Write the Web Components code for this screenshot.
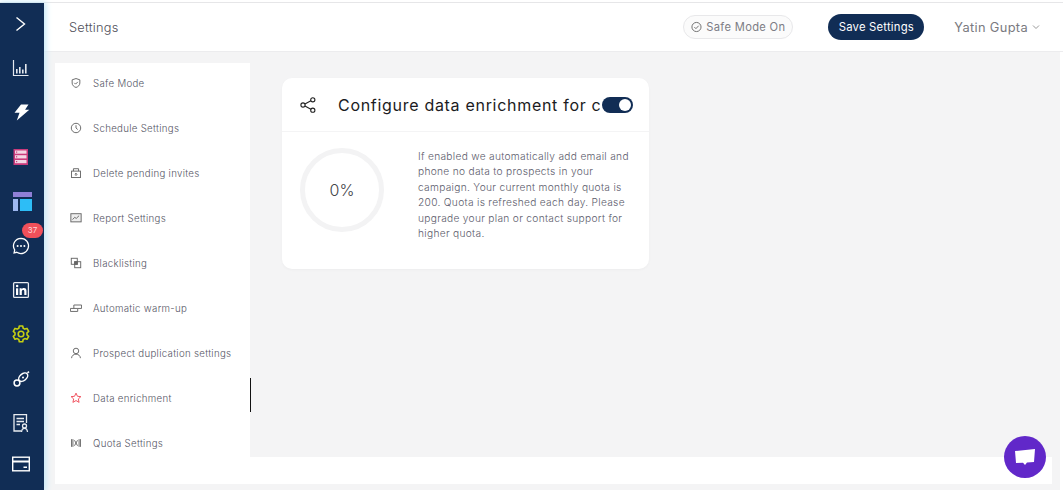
<!DOCTYPE html>
<html>
<head>
<meta charset="utf-8">
<title>Settings</title>
<style>
  html, body { margin: 0; padding: 0; background: #fff; }
  body { font-family: Inter, "Open Sans", sans-serif; width: 1063px; height: 490px; overflow: hidden; }
</style>
</head>
<body>
<app-shell>
  <side-nav slot="nav"></side-nav>
  <top-bar slot="top" title-text="Settings" user="Yatin Gupta"></top-bar>
  <settings-menu slot="menu"></settings-menu>
  <enrich-card slot="panel" percent="0%">
    <span slot="title">Configure data enrichment for campaigns</span>
    If enabled we automatically add email and<br>phone no data to prospects in your<br>campaign. Your current monthly quota is<br>200. Quota is refreshed each day. Please<br>upgrade your plan or contact support for<br>higher quota.
  </enrich-card>
</app-shell>
<chat-launcher></chat-launcher>

<script>
// left rail icons
const NAV_ICONS = [
  `<path d="M5.500 3.500l8 6.500-8 6.500" fill="none" stroke="#fff" stroke-width="1.400"/>`,
  `<g fill="none" stroke="#e4e8ee" stroke-width="1.200"><path d="M2.500 2v15.500h15"/></g><g fill="#e4e8ee"><rect x="5" y="11" width="1.600" height="4.500"/><rect x="8" y="9" width="1.600" height="6.500"/><rect x="11" y="11.500" width="1.600" height="4"/><rect x="14" y="6" width="1.600" height="9.500"/></g>`,
  `<path d="M10 2.500h7.500l-3.400 5.200h4.200L5.800 18.500l2.700-7.700H3.500z" fill="#fff"/>`,
  `<rect x="2.500" y="2" width="14.500" height="16" fill="#c93a7b"/><g fill="#f3d6e4"><rect x="4" y="3.500" width="11.500" height="3.200"/><rect x="4" y="8.200" width="11.500" height="3.200"/><rect x="4" y="13" width="11.500" height="3.200"/></g><g fill="#c93a7b"><rect x="5" y="4.500" width="1.200" height="1.200"/><rect x="5" y="9.200" width="1.200" height="1.200"/><rect x="5" y="14" width="1.200" height="1.200"/></g>`,
  `<rect x="0" y="0" width="19" height="5" fill="#8f7fd6"/><rect x="0" y="7" width="5" height="12" fill="#9db7f0"/><rect x="7" y="7" width="12" height="12" fill="#2dbdf6"/>`,
  `<path d="M10 2.300a7.600 7.600 0 1 1-4.200 14l-2.700.6.600-2.900A7.600 7.600 0 0 1 10 2.300z" fill="none" stroke="#fff" stroke-width="1.300"/><g fill="#fff"><circle cx="6.600" cy="10" r="1"/><circle cx="10" cy="10" r="1"/><circle cx="13.400" cy="10" r="1"/></g>`,
  `<rect x="2.600" y="2.600" width="14.800" height="14.800" rx="1" fill="none" stroke="#e8ebf0" stroke-width="1.300"/><g fill="#fff"><rect x="5" y="8.300" width="2.200" height="6.700"/><circle cx="6.100" cy="6" r="1.250"/><path d="M8.600 8.300h2.100v.95c.4-.65 1.200-1.150 2.200-1.150 1.900 0 2.600 1.200 2.600 3v3.900h-2.200v-3.500c0-.9-.3-1.500-1.100-1.500s-1.400.6-1.400 1.500V15H8.600z"/></g>`,
  `<g fill="none" stroke="#c6cf12" stroke-width="1.600" stroke-linejoin="round"><path d="M8.300 2h3.400l.5 2.200 1.600.9 2.200-.7 1.700 3-1.700 1.500v1.900l1.700 1.500-1.700 3-2.200-.7-1.600.9-.5 2.200H8.300l-.5-2.200-1.600-.9-2.200.7-1.700-3 1.700-1.500V8.900L2.300 7.400l1.700-3 2.200.7 1.600-.9z"/><circle cx="10" cy="10" r="2.800"/></g>`,
  `<g fill="none" stroke="#fff" stroke-width="1.500"><circle cx="6" cy="14" r="2.900"/><ellipse cx="12.200" cy="8.200" rx="5.200" ry="3.300" transform="rotate(-40 12.200 8.200)"/><path d="M16.500 3.900l1.500-1.300"/></g><circle cx="12" cy="8.500" r="1" fill="#fff"/>`,
  `<g fill="none" stroke="#e8ebf0" stroke-width="1.300"><path d="M10 18H3V1.700h12.500V10"/><path d="M5.500 5.500h7.500M5.500 8.500h7.500M5.500 11.500h3.500"/><circle cx="13.500" cy="13" r="2"/><path d="M10.500 19c.2-2.300 1.400-3.700 3-3.700s2.800 1.400 3 3.700"/></g>`,
  `<rect x="1.700" y="3.200" width="16.600" height="13.600" fill="none" stroke="#fff" stroke-width="1.400"/><rect x="2" y="6.500" width="16" height="2" fill="#fff"/><rect x="12.500" y="12.500" width="3.500" height="1.500" fill="#fff"/>`
];

class SideNav extends HTMLElement {
  constructor() {
    super();
    this.attachShadow({ mode: "open" });
  }

  connectedCallback() {
    const items = NAV_ICONS.map((icon, i) => {
      const badge = i === 5 ? `<span class="badge">37</span>` : "";
      const box = i === 4 ? "0 0 19 19" : "0 0 20 20";
      const size = i === 4 ? 19 : 20;
      return `<li class="${i === 4 ? "wide" : ""}">${badge}<svg width="${size}" height="${size}" viewBox="${box}">${icon}</svg></li>`;
    }).join("");

    this.shadowRoot.innerHTML = `
      <style>
        :host {
          display: block;
          width: 44px;
          background: #112d55;
          box-shadow: 1px 0 6px 1px #c4e8f8;
          position: relative;
          z-index: 2;
          overflow: visible;
        }
        ul {
          list-style: none;
          margin: -1.500px 0 0;
          padding: 0;
        }
        li {
          height: 44.4px;
          display: flex;
          align-items: center;
          justify-content: center;
          position: relative;
          padding-right: 3px;
          box-sizing: border-box;
        }
        li.wide svg { margin-left: 4px; }
        li:last-child { margin-top: -4px; }
        .badge {
          position: absolute;
          left: 22px;
          top: 0;
          width: 21px;
          height: 15px;
          border-radius: 8px;
          background: #f0505a;
          color: #ffd5d8;
          font-size: 8px;
          line-height: 15px;
          text-align: center;
        }
      </style>
      <ul>${items}</ul>
    `;
  }
}

class TopBar extends HTMLElement {
  constructor() {
    super();
    this.attachShadow({ mode: "open" });
  }

  connectedCallback() {
    const title = this.getAttribute("title-text") || "";
    const user = this.getAttribute("user") || "";

    this.shadowRoot.innerHTML = `
      <style>
        :host {
          display: flex;
          align-items: center;
          height: 49px;
          box-sizing: border-box;
          background: #fff;
          border-bottom: 1px solid #ececee;
          padding: 0 23px 0 25px;
          color: #666;
        }
        h1 {
          margin: 0;
          font-size: 12.800px;
          font-weight: 300;
          letter-spacing: .25px;
          color: #50505a;
          flex: 1;
        }
        .safe {
          display: flex;
          align-items: center;
          gap: 4px;
          height: 24px;
          box-sizing: border-box;
          padding: 0 7px;
          width: 110px;
          border: 1px solid #e8e8ea;
          border-radius: 12px;
          background: #fbfbfb;
          font-size: 11.200px;
          letter-spacing: .3px;
          color: #7d7d85;
          margin-right: 35px;
          white-space: nowrap;
        }
        button {
          height: 26px;
          width: 96px;
          border: 0;
          padding: 0;
          border-radius: 13px;
          background: #112d55;
          color: #fff;
          font: inherit;
          font-size: 11.300px;
          letter-spacing: .2px;
          margin-right: 30px;
        }
        .user {
          display: flex;
          align-items: center;
          gap: 4px;
          font-size: 12.800px;
          letter-spacing: .35px;
          color: #7a7a80;
          white-space: nowrap;
        }
      </style>
      <h1>${title}</h1>
      <div class="safe">
        <svg width="12" height="12" viewBox="0 0 12 12" fill="none" stroke="#666" stroke-width="1"><circle cx="6" cy="6" r="5"/><path d="M3.700 6.100l1.700 1.700 3-3.200"/></svg>
        Safe Mode On
      </div>
      <button>Save Settings</button>
      <div class="user">${user}
        <svg width="8" height="6" viewBox="0 0 8 6" fill="none" stroke="#999" stroke-width="1"><path d="M1 1.500l3 3 3-3"/></svg>
      </div>
    `;
  }
}

const MENU_ITEMS = [
  ["Safe Mode", `<path d="M7 1.800l4.500 1.500v3.700c0 2.600-2 4.400-4.500 5.200C4.500 11.400 2.500 9.600 2.500 7V3.300z"/><path d="M5 6.800l1.500 1.500 2.600-2.600"/>`],
  ["Schedule Settings", `<circle cx="7" cy="7" r="5.500"/><path d="M7 3.800V7l2 1.800"/>`],
  ["Delete pending invites", `<rect x="1.800" y="4.800" width="10.400" height="7.500"/><path d="M4 4.800V2h6v2.800M7 10.500V7.500M5.500 8.800L7 7.300l1.500 1.500"/>`],
  ["Report Settings", `<rect x="1" y="2" width="12" height="9.500" fill="#eee"/><path d="M3 8.800l2.500-2.600 1.800 1.300 3.300-3.200"/>`],
  ["Blacklisting", `<rect x="1.500" y="1.500" width="7" height="7"/><rect x="5.500" y="5.500" width="7" height="7"/><rect x="5.500" y="5.500" width="3" height="3" fill="#666"/>`],
  ["Automatic warm-up", `<path d="M.5 7.500h8.500v3.500H.5zM4.500 7.500V3.500h9v4H9"/>`],
  ["Prospect duplication settings", `<circle cx="7" cy="4.600" r="3.200"/><path d="M1.800 13c.3-3 2.400-4.600 5.200-4.600s4.900 1.600 5.200 4.600"/>`],
  ["Data enrichment", `<path d="M7 1.300l1.700 3.700 4 .4-3 2.700.9 4L7 10l-3.600 2.100.9-4-3-2.700 4-.4z"/>`],
  ["Quota Settings", `<path d="M1.800 2.500v9M3.400 2.500v9M12.200 2.500v9M10.600 2.500v9M5.200 3.800l3.600 6.400M8.800 3.800l-3.600 6.400"/>`]
];

class SettingsMenu extends HTMLElement {
  constructor() {
    super();
    this.attachShadow({ mode: "open" });
  }

  connectedCallback() {
    const rows = MENU_ITEMS.map(([label, icon]) => {
      const active = label === "Data enrichment";
      return `<li class="${active ? "active" : ""}">
        <svg width="12" height="12" viewBox="0 0 14 14" fill="none" stroke="${active ? "#ef4a58" : "#666"}" stroke-width="1.100">${icon}</svg>
        <span>${label}</span>
      </li>`;
    }).join("");

    this.shadowRoot.innerHTML = `
      <style>
        :host {
          display: block;
          width: 195px;
          height: 394px;
          background: #fff;
        }
        ul {
          list-style: none;
          margin: 0;
          padding: 10px 0 0 15px;
          display: flex;
          flex-direction: column;
          gap: 25px;
        }
        li {
          height: 20px;
          display: flex;
          align-items: center;
          gap: 11px;
          font-size: 9.700px;
          font-weight: 300;
          letter-spacing: .3px;
          color: #565666;
          white-space: nowrap;
          position: relative;
        }
        li.active::after {
          content: "";
          position: absolute;
          left: 180px;
          top: -10px;
          width: 1px;
          height: 34px;
          background: #111;
        }
      </style>
      <ul>${rows}</ul>
    `;
  }
}

class EnrichCard extends HTMLElement {
  constructor() {
    super();
    this.attachShadow({ mode: "open" });
  }

  connectedCallback() {
    const percent = this.getAttribute("percent") || "0%";

    this.shadowRoot.innerHTML = `
      <style>
        :host {
          display: block;
          width: 367px;
          height: 191px;
          background: #fff;
          border-radius: 10px;
          box-shadow: 0 1px 3px rgba(0,0,0,.03);
        }
        header {
          display: flex;
          align-items: center;
          height: 54px;
          box-sizing: border-box;
          border-bottom: 1px solid #f4f4f5;
          padding: 1px 16px 0 18px;
        }
        .share { flex: none; margin-right: 22px; }
        .title {
          flex: 1;
          min-width: 0;
          overflow: hidden;
          white-space: nowrap;
          font-size: 16px;
          letter-spacing: .7px;
          color: #1b1b22;
        }
        .toggle {
          flex: none;
          width: 31px;
          height: 16px;
          margin-left: 2px;
          border-radius: 8px;
          background: #112d55;
          position: relative;
        }
        .toggle::after {
          content: "";
          position: absolute;
          right: 2px;
          top: 2px;
          width: 12px;
          height: 12px;
          border-radius: 50%;
          background: #fff;
        }
        .body {
          display: flex;
          padding: 16px 0 0 18px;
          gap: 34px;
        }
        .ring {
          flex: none;
          width: 84px;
          height: 84px;
          box-sizing: border-box;
          border: 5px solid #f3f3f4;
          border-radius: 50%;
          display: flex;
          align-items: center;
          justify-content: center;
          font-size: 16px;
          font-weight: 300;
          color: #44444a;
        }
        .text {
          font-size: 10.200px;
          font-weight: 300;
          letter-spacing: .3px;
          line-height: 15.400px;
          color: #5c5c6c;
          white-space: nowrap;
          margin-top: 1px;
        }
      </style>
      <header>
        <svg class="share" width="16" height="16" viewBox="0 0 16 16" fill="none" stroke="#222" stroke-width="1.100">
          <circle cx="12.800" cy="2.800" r="2.100"/>
          <circle cx="3" cy="8" r="2.100"/>
          <circle cx="12.800" cy="13.200" r="2.100"/>
          <path d="M4.900 7l6-3.200M4.900 9l6 3.200"/>
        </svg>
        <div class="title"><slot name="title"></slot></div>
        <div class="toggle"></div>
      </header>
      <div class="body">
        <div class="ring">${percent}</div>
        <div class="text"><slot></slot></div>
      </div>
    `;
  }
}

class AppShell extends HTMLElement {
  constructor() {
    super();
    this.attachShadow({ mode: "open" });
    this.shadowRoot.innerHTML = `
      <style>
        :host {
          display: block;
          width: 1063px;
          height: 490px;
          background: #fff;
        }
        .strip {
          height: 3px;
          box-sizing: border-box;
          border-bottom: 1px solid #e6e6e8;
        }
        .row {
          display: flex;
          height: 487px;
        }
        main {
          flex: 1;
          min-width: 0;
          display: flex;
          flex-direction: column;
        }
        .area {
          flex: 1;
          margin-right: 3px;
          background: #f4f4f5;
          padding: 11px 8px 6px 11px;
          min-height: 0;
        }
        .sheet {
          height: 421px;
          background: #fff;
        }
        .split {
          display: flex;
          margin-right: -8px;
        }
        .panel {
          flex: 1;
          height: 394px;
          background: #f4f4f5;
          box-sizing: border-box;
          padding: 15px 0 0 32px;
        }
      </style>
      <div class="strip"></div>
      <div class="row">
        <slot name="nav"></slot>
        <main>
          <slot name="top"></slot>
          <div class="area">
            <div class="sheet">
              <div class="split">
                <slot name="menu"></slot>
                <div class="panel"><slot name="panel"></slot></div>
              </div>
            </div>
          </div>
        </main>
      </div>
    `;
  }
}

class ChatLauncher extends HTMLElement {
  constructor() {
    super();
    this.attachShadow({ mode: "open" });
    this.shadowRoot.innerHTML = `
      <style>
        :host {
          position: absolute;
          left: 1004px;
          top: 436px;
          width: 42px;
          height: 42px;
          border-radius: 50%;
          background: #6128c9;
          display: flex;
          align-items: center;
          justify-content: center;
          z-index: 5;
        }
      </style>
      <svg width="22" height="18" viewBox="0 0 22 18"><path d="M1 3l20-2-1 13-7 .5-2 2.500-2-2.300-7 .3z" fill="#fff"/></svg>
    `;
  }
}

customElements.define("side-nav", SideNav);
customElements.define("top-bar", TopBar);
customElements.define("settings-menu", SettingsMenu);
customElements.define("enrich-card", EnrichCard);
customElements.define("app-shell", AppShell);
customElements.define("chat-launcher", ChatLauncher);
</script>
</body>
</html>
